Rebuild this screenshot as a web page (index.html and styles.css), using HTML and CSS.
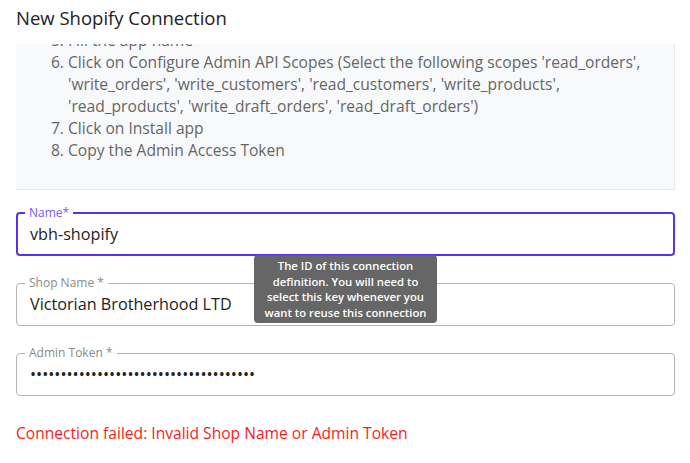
FILE: index.html
```html
<!DOCTYPE html>
<html>
<head>
<meta charset="utf-8">
<link rel="stylesheet" href="styles.css">
</head>
<body>
<div class="dialog">
  <h2 class="title">New Shopify Connection</h2>
  <div class="instructions">
    <ol class="steps" start="5">
      <li>Fill the app name</li>
      <li>Click on Configure Admin API Scopes (Select the following scopes 'read_orders', 'write_orders', 'write_customers', 'read_customers', 'write_products', 'read_products', 'write_draft_orders', 'read_draft_orders')</li>
      <li>Click on Install app</li>
      <li>Copy the Admin Access Token</li>
    </ol>
  </div>
  <div class="fields">
    <div class="field-wrap">
      <fieldset class="field focused">
        <legend>Name*</legend>
        <input class="input" type="text" value="vbh-shopify">
      </fieldset>
      <div class="tooltip">The ID of this connection definition. You will need to select this key whenever you want to reuse this connection</div>
    </div>
    <fieldset class="field">
      <legend>Shop Name *</legend>
      <input class="input" type="text" value="Victorian Brotherhood LTD">
    </fieldset>
    <fieldset class="field">
      <legend>Admin Token *</legend>
      <input class="input" type="password" value="abcdefghijklmnopqrstuvwxyz0123456789a">
    </fieldset>
  </div>
  <p class="error">Connection failed: Invalid Shop Name or Admin Token</p>
</div>
</body>
</html>
```
FILE: styles.css
```css
* { box-sizing: border-box; }
html, body { margin: 0; padding: 0; background: #fff; }
body { font-family: "Open Sans", "Liberation Sans", sans-serif; color: #222; }
.dialog { padding: 0 15px 0 16px; }
.title {
  margin: 0;
  font-size: 18.5px;
  font-weight: 400;
  line-height: 26px;
  padding-top: 5px;
  height: 44px;
  color: #222;
}
.instructions {
  height: 146px;
  overflow: hidden;
  background: #f8f9fa;
  border-right: 1px solid #e6e7e9;
  border-bottom: 1px solid #e6e7e9;
  padding: 0 20px 0 0;
}
.steps {
  margin: -15px 0 0 0;
  padding-left: 52px;
  font-size: 15.6px;
  line-height: 22px;
  color: #666;
}
.fields {
  margin-top: 15px;
  display: flex;
  flex-direction: column;
  gap: 19px;
}
.field-wrap { position: relative; }
.field {
  margin: 0;
  border: 1px solid #b5b5b5;
  border-radius: 4px;
  padding: 0 13px 9px 13px;
  min-width: 0;
}
.field legend {
  font-size: 12px;
  line-height: 16px;
  color: #8a8a8a;
  padding: 0 4px;
  margin-left: -5px;
}
.field.focused {
  border: 2px solid #5b2ff0;
  padding: 0 12px 8px 12px;
}
.field.focused legend { color: #7a57f5; margin-left: -5px; }
.input {
  display: block;
  width: 100%;
  border: 0;
  outline: 0;
  padding: 0;
  margin: 1px 0 0 0;
  height: 24px;
  font-family: "Open Sans", "Liberation Sans", sans-serif;
  font-size: 16.2px;
  color: #222;
  background: transparent;
}
.tooltip {
  position: absolute;
  left: 238px;
  top: 50px;
  width: 183px;
  padding: 3px 5px;
  background: rgba(97, 97, 97, 0.97);
  color: #fff;
  border-radius: 4px;
  font-size: 11.3px;
  font-weight: 600;
  line-height: 15.5px;
  text-align: center;
}
.error {
  margin: 26px 0 0 0;
  font-size: 15.6px;
  line-height: 22px;
  color: #f51d1d;
}
```
